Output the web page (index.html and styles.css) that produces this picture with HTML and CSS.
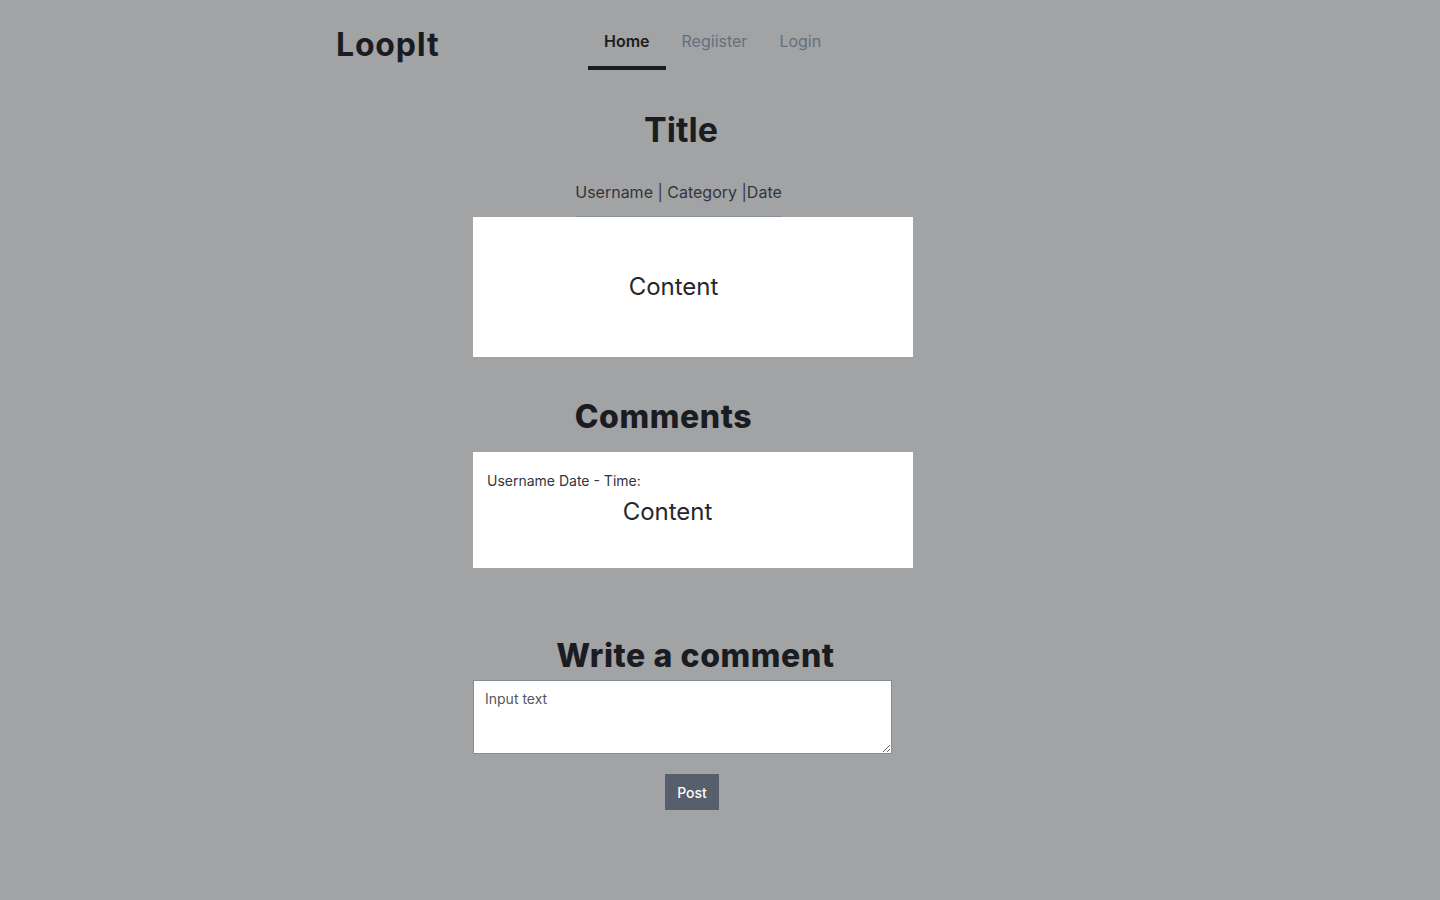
FILE: index.html
```html
<!DOCTYPE html>
<html lang="en">
<head>
<meta charset="utf-8">
<title>LoopIt - Post</title>
<link rel="stylesheet" href="styles.css">
</head>
<body>
<header class="header">
  <div class="logo">LoopIt</div>
  <nav class="nav">
    <a class="nav-item active" href="#">Home</a>
    <a class="nav-item" href="#">Regiister</a>
    <a class="nav-item" href="#">Login</a>
  </nav>
</header>
<main class="main">
  <h1 class="title">Title</h1>
  <div class="meta-wrap"><div class="meta">Username | Category |Date</div></div>
  <div class="post-box"><p class="post-content">Content</p></div>

  <h2 class="section-title comments-title">Comments</h2>
  <div class="comment-box">
    <div class="comment-meta">Username Date - Time:</div>
    <p class="comment-content">Content</p>
  </div>

  <h2 class="section-title write-title">Write a comment</h2>
  <textarea class="comment-input" placeholder="Input text"></textarea>
  <div class="actions"><button class="post-btn">Post</button></div>
</main>
</body>
</html>
```
FILE: styles.css
```css
html, body {
  margin: 0;
  padding: 0;
}
body {
  background: #a2a3a5;
  font-family: Inter, "Noto Sans", sans-serif;
  color: #1b1c21;
  min-height: 900px;
}
.header {
  width: 768px;
  margin: 0 auto;
  display: flex;
  align-items: flex-start;
  height: 70px;
}
.logo {
  font-size: 32px;
  font-weight: 700;
  line-height: 40px;
  padding-top: 25px;
  width: 252px;
  letter-spacing: 0.8px;
}
.nav {
  display: flex;
}
.nav-item {
  display: block;
  padding: 29px 16px 13px;
  line-height: 24px;
  font-size: 16px;
  color: #676e7c;
  text-decoration: none;
  border-bottom: 4px solid transparent;
}
.nav-item.active {
  color: #1b1c21;
  font-weight: 600;
  border-bottom-color: #1b1c21;
}
.main {
  width: 440px;
  margin-left: 473px;
  display: flex;
  flex-direction: column;
}
.title {
  margin: 40px 0 0;
  font-size: 34px;
  line-height: 40px;
  font-weight: 700;
  text-align: center;
  padding-right: 24px;
}
.meta-wrap {
  display: flex;
  justify-content: center;
  padding-right: 29px;
  margin-top: 30px;
}
.meta {
  font-size: 16px;
  line-height: 24px;
  color: #33353b;
  padding-bottom: 12px;
  border-bottom: 1px solid #8c909a;
}
.post-box {
  background: #fff;
  height: 140px;
  display: flex;
  align-items: center;
  justify-content: center;
  padding-right: 39px;
}
.post-content, .comment-content {
  margin: 0;
  font-size: 24px;
  line-height: 32px;
  color: #25272d;
}
.section-title {
  margin: 0;
  font-size: 32px;
  line-height: 40px;
  font-weight: 800;
  text-align: center;
  letter-spacing: 0.6px;
}
.comments-title {
  margin-top: 40px;
  padding-right: 59px;
}
.comment-box {
  margin-top: 15px;
  background: #fff;
  height: 116px;
  box-sizing: border-box;
  padding: 19px 14px 0;
}
.comment-meta {
  font-size: 14px;
  line-height: 20px;
  color: #33353b;
}
.comment-content {
  text-align: center;
  padding-right: 51px;
  margin-top: 5px;
}
.write-title {
  margin-top: 68px;
  padding-left: 5px;
}
.comment-input {
  margin-top: 4px;
  width: 419px;
  height: 74px;
  box-sizing: border-box;
  border: 1px solid #858a96;
  border-radius: 0;
  padding: 8px 11px;
  font-family: Inter, "Noto Sans", sans-serif;
  font-size: 14px;
  line-height: 20px;
  color: #33353b;
  background: #fff;
  display: block;
  resize: vertical;
}
.comment-input::placeholder {
  color: #55585f;
  opacity: 1;
}
.actions {
  display: flex;
  justify-content: center;
  padding-right: 2px;
  margin-top: 20px;
}
.post-btn {
  width: 54px;
  height: 36px;
  border: none;
  background: #575e6c;
  color: #fff;
  font-family: Inter, "Noto Sans", sans-serif;
  font-size: 14px;
  font-weight: 500;
  padding: 0;
  cursor: pointer;
}
```
